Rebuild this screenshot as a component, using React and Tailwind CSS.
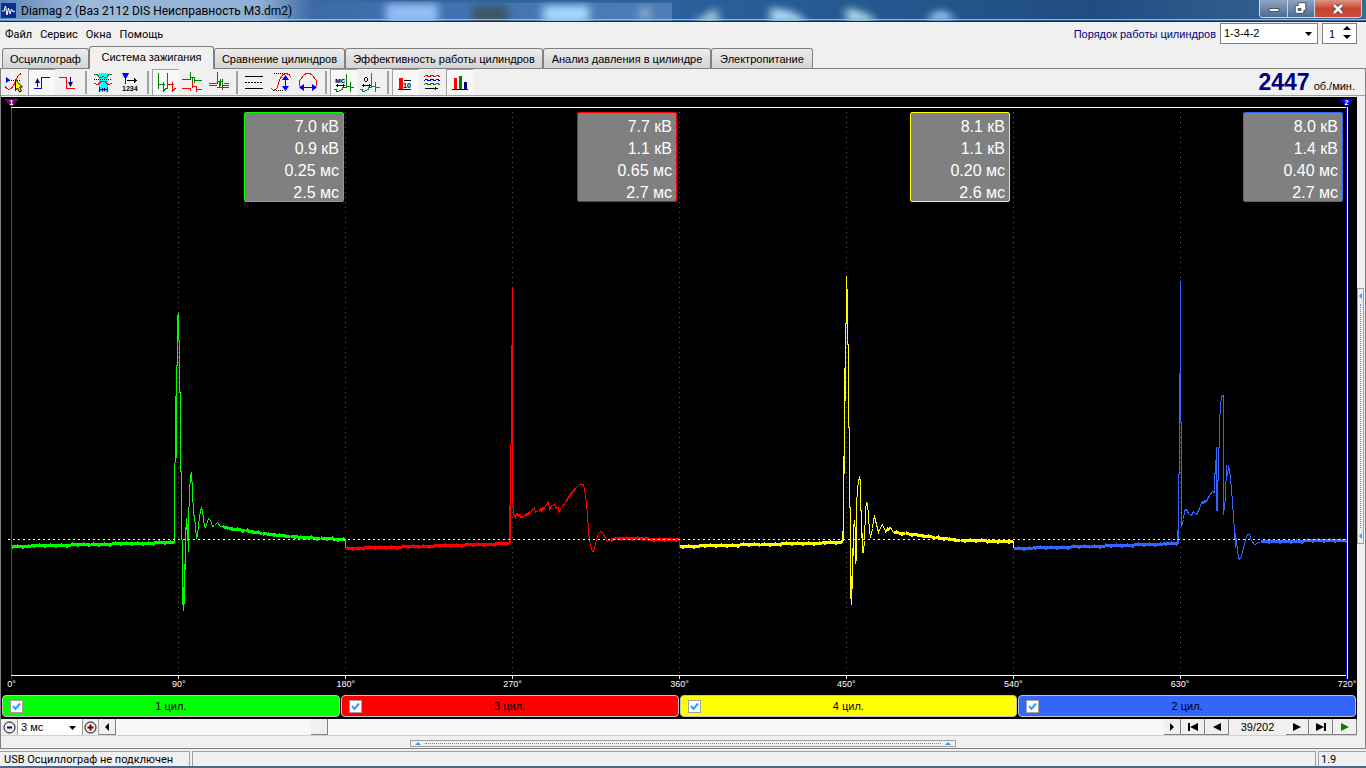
import React, { useState } from 'react';

const TABS = [
  { id: 'scope', label: 'Осциллограф', width: 'w-[87px]' },
  { id: 'ignition', label: 'Система зажигания', width: 'w-[125px]' },
  { id: 'compare', label: 'Сравнение цилиндров', width: 'w-[131px]' },
  { id: 'efficiency', label: 'Эффективность работы цилиндров', width: 'w-[198px]' },
  { id: 'pressure', label: 'Анализ давления в цилиндре', width: 'w-[168px]' },
  { id: 'power', label: 'Электропитание', width: 'w-[102px]' },
];

const CYLINDERS = [
  { name: '1 цил.', bg: 'bg-[#00ff00]', border: 'border-[#00ff00]', values: ['7.0 кВ', '0.9 кВ', '0.25 мс', '2.5 мс'] },
  { name: '3 цил.', bg: 'bg-[#ff0000]', border: 'border-[#ff0000]', values: ['7.7 кВ', '1.1 кВ', '0.65 мс', '2.7 мс'] },
  { name: '4 цил.', bg: 'bg-[#ffff00]', border: 'border-[#ffff00]', values: ['8.1 кВ', '1.1 кВ', '0.20 мс', '2.6 мс'] },
  { name: '2 цил.', bg: 'bg-[#3366ff]', border: 'border-[#3366ff]', values: ['8.0 кВ', '1.4 кВ', '0.40 мс', '2.7 мс'] },
];

// Secondary voltage per cylinder, [x, y] in chart units
const TRACES = [
  {
    color: '#00ff00',
    points: [
      [11, 546], [90, 544], [174, 542], [174, 470], [175, 456], [175, 396], [176, 457], [176, 365], [177, 365], [177, 317], [178, 313],
      [178, 340], [179, 340], [179, 392], [180, 392], [180, 471], [181, 471], [181, 539], [182, 540], [182, 598], [183, 610],
      [183, 587], [184, 603], [184, 564], [185, 569], [185, 535], [186, 518], [187, 540], [187, 524], [188, 551], [188, 523],
      [189, 492], [190, 475], [191, 473], [192, 490], [193, 515], [194, 515], [195, 527], [196, 537], [197, 535], [198, 524],
      [200, 510], [201, 508], [202, 510], [203, 518], [204, 526], [205, 527], [207, 521], [208, 518], [210, 520], [212, 526],
      [214, 525], [217, 522], [220, 526], [222, 526], [228, 528], [245, 530], [262, 533], [290, 536], [320, 538], [345, 539], [345, 547],
    ],
  },
  {
    color: '#ff0000',
    points: [
      [345, 548], [420, 546], [509, 543], [509, 505], [510, 542], [510, 444], [511, 444], [511, 345], [512, 345], [512, 287], [512, 505],
      [513, 505], [513, 513], [515, 517], [516, 513], [521, 517], [525, 515], [530, 512], [534, 507], [535, 512], [538, 510], [544, 507],
      [548, 501], [549, 509], [551, 505], [554, 504], [556, 508], [558, 506], [558, 512], [561, 507], [565, 502], [570, 494],
      [575, 488], [579, 484], [583, 484], [585, 495], [586, 503], [587, 515], [588, 530], [589, 540], [590, 545], [592, 551], [593, 551],
      [595, 544], [597, 535], [599, 532], [601, 531], [603, 534], [605, 538], [607, 541], [610, 539], [616, 538], [679, 539], [679, 547],
    ],
  },
  {
    color: '#ffff00',
    points: [
      [679, 546], [760, 544], [842, 542], [842, 531], [843, 540], [843, 456], [844, 473], [844, 368], [845, 400], [845, 323], [846, 323],
      [846, 276], [847, 301], [847, 344], [848, 344], [848, 427], [849, 427], [849, 507], [850, 507], [850, 592], [851, 604],
      [851, 576], [852, 588], [852, 548], [853, 555], [853, 527], [854, 520], [855, 532], [855, 563], [856, 558], [856, 505],
      [857, 488], [859, 476], [860, 482], [860, 510], [861, 510], [861, 537], [862, 533], [862, 552], [863, 552], [864, 540],
      [865, 510], [866, 502], [867, 503], [868, 516], [869, 530], [870, 537], [872, 528], [873, 519], [874, 516], [876, 524],
      [878, 532], [880, 527], [882, 524], [885, 531], [890, 527], [893, 532], [905, 533], [935, 537], [960, 540], [1013, 541], [1013, 547],
    ],
  },
  {
    color: '#3366ff',
    points: [
      [1013, 548], [1090, 546], [1177, 543], [1177, 530], [1178, 543], [1178, 474], [1179, 474], [1179, 373], [1180, 421], [1180, 280], [1180, 422],
      [1181, 422], [1181, 526], [1183, 519], [1184, 510], [1186, 509], [1188, 513], [1191, 515], [1193, 511], [1196, 514],
      [1199, 508], [1201, 502], [1206, 501], [1209, 495], [1212, 491], [1214, 492], [1214, 473], [1215, 473], [1216, 447],
      [1216, 510], [1217, 510], [1217, 480], [1218, 480], [1218, 447], [1219, 447], [1219, 422], [1220, 405], [1221, 396],
      [1223, 395], [1223, 514], [1225, 498], [1226, 465], [1227, 475], [1228, 467], [1229, 469], [1230, 478], [1231, 488], [1232, 503],
      [1233, 515], [1234, 532], [1235, 547], [1235, 533], [1237, 550], [1238, 557], [1239, 559], [1241, 556], [1243, 548],
      [1245, 539], [1247, 534], [1249, 534], [1251, 540], [1254, 544], [1257, 543], [1260, 541], [1346, 540],
    ],
  },
];

const GRID_X = [178, 345, 512, 679, 846, 1013, 1180];

const DEGREES = ['90°', '180°', '270°', '360°', '450°', '540°', '630°'];

// Adds measurement noise to the long, nearly flat parts of a trace
function tracePath(points) {
  let d = `M${points[0][0]} ${points[0][1]}`;
  for (let i = 1; i < points.length; i++) {
    const [x0, y0] = points[i - 1];
    const [x1, y1] = points[i];
    if (x1 - x0 > 4) {
      for (let x = x0 + 1; x < x1; x++) {
        const y = Math.round(y0 + ((y1 - y0) * (x - x0)) / (x1 - x0));
        const n = (x * 7919 + i * 131) % 11;
        d += `L${x} ${y - 1}V${y + (n > 8 ? 2 : 1)}`;
        if (n === 4) d += `V${y - 2}`;
      }
    }
    d += `L${x1} ${y1}`;
  }
  return d;
}

const line = { fill: 'none', strokeWidth: 1, shapeRendering: 'crispEdges' };

const ICONS = {
  pick: (
    <>
      <path d="M5 8L9 11L5 14Z" fill="#0000ff" />
      <path d="M8 11.500H19" stroke="#000080" strokeDasharray="1 1" {...line} />
      <path d="M4 17Q6 21 9 20T14 13T20 4.500" stroke="#ff0000" {...line} />
      <path d="M14.500 11V21.500L16.500 19L18.500 23L20.500 22L18.500 18H21.500Z" fill="#ffff00" stroke="#000" />
    </>
  ),
  rising: (
    <>
      <path d="M6 19.500H13.500V8.500H22" stroke="#0000ff" {...line} />
      <path d="M9.500 18V10" stroke="#000080" {...line} />
      <path d="M7 14L9.500 9L12 14Z" fill="#000080" />
    </>
  ),
  falling: (
    <>
      <path d="M4 8.500H11.500V19.500H20" stroke="#ff0000" {...line} />
      <path d="M15.500 8V17" stroke="#000080" {...line} />
      <path d="M13 13L15.500 18L18 13Z" fill="#000080" />
    </>
  ),
  window: (
    <>
      <path d="M9 4H18V23H9Z" fill="#00ffff" />
      <path d="M4 5.500H7L10 9L13.500 7.500L16 9L19 5.500H22" stroke="#008000" {...line} />
      <path d="M4 10.500H22" stroke="#000" strokeDasharray="1 1" {...line} />
      <path d="M4 14.500L8 15.500L11 12.500H15L18 15.500L22 14.500" stroke="#ff0000" {...line} />
      <path d="M9.500 18V23M17.500 18V23M10 20.500H17M12.500 19V22M14.500 19V22" stroke="#000080" {...line} />
    </>
  ),
  numbers: (
    <>
      <path d="M5 4H12L9.500 9H7.500Z" fill="#0000ff" />
      <path d="M8.500 8V15" stroke="#0000ff" {...line} />
      <path d="M10 11.500H20M17.500 9V14M18.500 10V13" stroke="#000" {...line} />
      <text x="5" y="22" fontSize="7" fontWeight="bold" fontFamily="Liberation Sans, sans-serif">1234</text>
    </>
  ),
  parade: (
    <>
      <path d="M6.500 4V20M6.500 15.500H12.500M11.500 13V22L14.500 19" stroke="#008000" {...line} />
      <path d="M15.500 4V20M15.500 15.500H21.500M20.500 13V22L23.500 19" stroke="#ff0000" {...line} />
    </>
  ),
  raster: (
    <>
      <path d="M3 10.500H11.500V3M11.500 8.500H15.500V14M13.500 8V13M15.500 11.500H23" stroke="#008000" {...line} />
      <path d="M3 19.500H11.500V22M13.500 12V19M13.500 17.500H17.500V23M17.500 20.500H23" stroke="#ff0000" {...line} />
    </>
  ),
  overlay: (
    <>
      <path d="M3 16.500H11M13.500 12V19M11 18.500H23M16.500 14V21M18 14.500H23" stroke="#ff0000" {...line} />
      <path d="M3 14.500H11.500V3M11.500 12.500H16.500V19M14.500 10V17M16.500 16.500H23M16.500 10V13" stroke="#008000" {...line} />
    </>
  ),
  lines: (
    <>
      <path d="M4 7.500H22M4 19.500H22" stroke="#000" {...line} />
      <path d="M4 13.500H22" stroke="#000" strokeDasharray="2 1" {...line} />
    </>
  ),
  height: (
    <>
      <path d="M6 4.500H15M6 21.500H15" stroke="#000" strokeDasharray="1 1" {...line} />
      <path d="M3 19.500L6 21.500L9 19L12 10L15 5.500L18 4.500L21 5.500L23 8" stroke="#ff0000" {...line} />
      <path d="M17.500 9V20" stroke="#0000ff" {...line} />
      <path d="M14 11L17.500 6L21 11ZM14 17L17.500 22L21 17Z" fill="#0000ff" />
    </>
  ),
  width: (
    <>
      <path d="M6 19L4.500 16V12L8 7L11 4.500H15L18 7L21.500 12V16L20 19" stroke="#ff0000" {...line} />
      <path d="M8 18.500H18" stroke="#0000ff" {...line} />
      <path d="M9 15L4 18.500L9 22ZM17 15L22 18.500L17 22Z" fill="#0000ff" />
    </>
  ),
  timeMs: (
    <>
      <path d="M16.500 5V19M16.500 17.500H20.500V23M20.500 13V19M20 18.500H24M4 20.500H6V22H9L12 20.500V18.500H16.500" stroke="#008000" {...line} />
      <path d="M6 16.500H15M7.500 15V18M13.500 15V18" stroke="#000" {...line} />
      <text x="5" y="14" fontSize="8" fontWeight="bold" fontFamily="Liberation Sans, sans-serif">мс</text>
    </>
  ),
  timeDeg: (
    <>
      <path d="M14.500 4V19M14.500 17.500H18.500V23M18.500 13V19M18 18.500H23M3 20.500H5V22H8L11 20.500V18.500H14.500" stroke="#008080" {...line} />
      <path d="M5 16.500H14M6.500 15V18M12.500 15V18M8 8.500H10M8 12.500H10M7.500 9V12M10.500 9V12" stroke="#000" {...line} />
    </>
  ),
  digits: (
    <>
      <path d="M7 9H11V20H7Z" fill="#ff0000" />
      <path d="M6 20.500H19M12 11.500H19" stroke="#000" {...line} />
      <text x="11" y="19" fontSize="7" fontWeight="bold" fontFamily="Liberation Sans, sans-serif">10</text>
    </>
  ),
  waves: (
    <>
      <path d="M5 8L7 6L10 8L13 6L16 8L18 6L21 8" stroke="#ff0000" {...line} />
      <path d="M5 12L7 10L10 12L13 10L16 12L18 10L21 12" stroke="#0000ff" {...line} />
      <path d="M5 16L7 14L10 16L13 14L16 16L18 14L21 16" stroke="#008000" {...line} />
      <path d="M6 19.500H19M16.500 18V21" stroke="#000" {...line} />
    </>
  ),
  bars: (
    <>
      <path d="M8 9H11V20H8Z" fill="#ff0000" />
      <path d="M13 7H16V20H13Z" fill="#008000" />
      <path d="M18 13H21V20H18Z" fill="#000080" />
      <path d="M6 20.500H22" stroke="#000" {...line} />
    </>
  ),
};

const TOOL_GROUPS = [
  [['pick', 'Курсор', false], ['rising', 'Фронт', true], ['falling', 'Спад', false]],
  [['window', 'Окно', false], ['numbers', 'Нумерация', false]],
  [['parade', 'Парад', true], ['raster', 'Растр', false], ['overlay', 'Наложение', false]],
  [['lines', 'Уровни', false], ['height', 'Масштаб', false], ['width', 'Ширина', false]],
  [['timeMs', 'Время, мс', true], ['timeDeg', 'Градусы', false]],
  [['digits', 'Значения', true], ['waves', 'Кадры', false], ['bars', 'Гистограмма', true]],
];

function ToolButton({ icon, label, pressed }) {
  return (
    <button
      type="button"
      aria-label={label}
      aria-pressed={pressed}
      className={`w-[27px] h-[26px] ${pressed ? 'bg-[#f8f8f8] border-l border-t border-[#a0a0a0]' : ''}`}
    >
      <svg viewBox="0 0 27 26" className={`block w-[27px] h-[26px] ${pressed ? '-ml-px -mt-px' : ''}`}>
        {ICONS[icon]}
      </svg>
    </button>
  );
}

function TitleBar() {
  return (
    <header className="relative h-[22px] flex justify-between bg-[#2a5c94] border-b border-[#1c2c48] overflow-hidden">
      <svg className="absolute inset-0 w-full h-full" viewBox="0 0 1366 22" preserveAspectRatio="none">
        <defs>
          <linearGradient id="glass">
            <stop offset="0" stopColor="#5c86ba" />
            <stop offset="0.06" stopColor="#9cb9da" />
            <stop offset="0.19" stopColor="#8fb0d6" />
            <stop offset="0.23" stopColor="#3a68a2" />
            <stop offset="0.49" stopColor="#2a619c" />
            <stop offset="0.8" stopColor="#204d80" />
            <stop offset="1" stopColor="#3c6798" />
          </linearGradient>
          <linearGradient id="panel">
            <stop offset="0" stopColor="#4a7ab4" stopOpacity="0" />
            <stop offset="0.3" stopColor="#3e70b0" />
            <stop offset="1" stopColor="#4e7eb6" />
          </linearGradient>
          <filter id="soft"><feGaussianBlur stdDeviation="4" /></filter>
        </defs>
        <rect width="1366" height="22" fill="url(#glass)" />
        <path d="M300 3H672V22H300Z" fill="url(#panel)" />
        <g filter="url(#soft)">
          <path d="M386 4H438V24H386Z" fill="#93bdf2" />
          <path d="M472 6H508V24H472Z" fill="#3c5566" />
          <path d="M543 6H589V24H543Z" fill="#a4d6fc" />
          <path d="M640 8H650V20H640Z" fill="#8fb0cc" />
          <path d="M716 8L720 24H692Z" fill="#a0c8d8" />
          <path d="M770 8Q800 10 806 24H770Z" fill="#a8d4ee" />
          <path d="M846 8Q872 12 876 24H846Z" fill="#a4d0dc" />
          <path d="M926 22Q940 0 956 22Z" fill="#9cc4f0" />
        </g>
        <path d="M0 20.500H1366" stroke="#a9bdd4" />
      </svg>
      <div className="relative flex items-center gap-[5px] pl-px">
        <svg viewBox="0 0 15 15" className="w-[15px] h-[15px]">
          <rect width="15" height="15" fill="#0a2f8c" />
          <path d="M1 8H3L4.500 3L6 12L7.500 5L9 11L10.500 6L12 9L14 8" fill="none" stroke="#fff" />
        </svg>
        <h1 className="text-[12px] leading-[20px] font-['Roboto',sans-serif] text-black">Diamag 2 (Ваз 2112 DIS Неисправность М3.dm2)</h1>
      </div>
      <div className="relative flex h-[18px] mr-1 rounded-b border border-t-0 border-[#d0dae6] overflow-hidden">
        <button type="button" aria-label="Свернуть" className="w-[28px] flex items-center justify-center bg-gradient-to-b from-[#8fa6c0] to-[#4a6c94] border-r border-[#c8d4e2]">
          <svg viewBox="0 0 28 17" className="w-[28px] h-[17px]"><path d="M9.500 8.500H19.500V11.500H9.500Z" fill="#fff" stroke="#444c58" /></svg>
        </button>
        <button type="button" aria-label="Восстановить" className="w-[27px] flex items-center justify-center bg-gradient-to-b from-[#8fa6c0] to-[#4a6c94] border-r border-[#c8d4e2]">
          <svg viewBox="0 0 27 17" className="w-[27px] h-[17px]">
            <path d="M10.500 2.500H18.500V10.500H16.500V13.500H7.500V5.500H10.500Z" fill="#fff" stroke="#444c58" />
            <path d="M10.500 8.500H13.500V10.500H10.500Z" fill="#6c86a6" stroke="#444c58" />
          </svg>
        </button>
        <button type="button" aria-label="Закрыть" className="w-[46px] flex items-center justify-center bg-gradient-to-b from-[#dc9484] via-[#c8452c] to-[#c8503c]">
          <svg viewBox="0 0 12 12" className="w-[12px] h-[12px]">
            <path d="M2 2L10 10M10 2L2 10" stroke="#503c44" strokeWidth="4.500" />
            <path d="M2 2L10 10M10 2L2 10" stroke="#fff" strokeWidth="2.600" />
          </svg>
        </button>
      </div>
    </header>
  );
}

function MenuBar() {
  return (
    <div className="h-[24px] flex justify-between">
      <nav className="flex items-center gap-2 pl-[5px] pt-0.5 font-['Roboto',sans-serif]">
        {['Файл', 'Сервис', 'Окна', 'Помощь'].map((item) => (
          <button key={item} type="button" className="text-[11px]">{item}</button>
        ))}
      </nav>
      <div className="flex items-start gap-1 pt-px pr-[9px]">
        <label htmlFor="order" className="text-[11px] leading-[22px] text-[#000080]">Порядок работы цилиндров</label>
        <div className="relative">
          <select id="order" className="appearance-none w-[98px] h-[21px] pl-[3px] pb-0.5 text-[11px] bg-white border border-[#808080]" defaultValue="1-3-4-2">
            <option>1-3-4-2</option>
            <option>1-2-4-3</option>
          </select>
          <svg viewBox="0 0 7 4" className="absolute right-[6px] top-[9px] w-[7px] h-[4px] pointer-events-none"><path d="M0 0H7L3.500 4Z" /></svg>
        </div>
        <div className="relative">
          <input type="text" aria-label="Номер цилиндра" defaultValue="1" className="w-[35px] h-[21px] pl-1.5 text-[11px] bg-white border border-[#808080]" />
          <svg viewBox="0 0 8 14" className="absolute right-1.5 top-[3px] w-[8px] h-[14px] pointer-events-none"><path d="M4 0L8 4H0ZM0 9H8L4 13Z" /></svg>
        </div>
      </div>
    </div>
  );
}

function ScopeChart() {
  return (
    <div className="relative flex-1 min-h-[320px] flex flex-col bg-black">
      <svg viewBox="1 97 1356 598" preserveAspectRatio="none" className="absolute inset-0 w-full h-full" shapeRendering="crispEdges" fill="none">
        {GRID_X.map((x) => (
          <g key={x}>
            <path d={`M${x + 0.5} 112V675`} stroke="#585858" strokeDasharray="1 4" />
            <path d={`M${x + 0.5} 675V679`} stroke="#fff" />
          </g>
        ))}
        <path d="M11 107.500H1347M11 675.500H1347" stroke="#fff" />
        <path d="M11.500 104V107M11.500 676V679" stroke="#800080" />
        <path d="M11.500 108V675" stroke="#505050" />
        <path d="M1346.500 104V679" stroke="#0000ff" />
        <path d="M1347.500 107V679" stroke="#fff" />
        {TRACES.map((t) => (
          <path key={t.color} d={tracePath(t.points)} stroke={t.color} transform="translate(0.5 0.5)" />
        ))}
        <path d="M8 539.500H1346" stroke="#fff" strokeDasharray="2 3" />
        <g shapeRendering="auto">
          <path d="M4 99H19L11.500 107Z" fill="#800080" />
          <path d="M1339 99H1354L1346.500 107Z" fill="#0000ff" />
          <text x="9.500" y="105" fontSize="7" fontWeight="bold" fill="#fff" fontFamily="Liberation Sans, sans-serif">1</text>
          <text x="1344.500" y="105" fontSize="7" fontWeight="bold" fill="#fff" fontFamily="Liberation Sans, sans-serif">2</text>
        </g>
      </svg>
      <div className="relative grid grid-cols-4 pt-[15px] pl-[10px] pr-[14px]">
        {CYLINDERS.map((c) => (
          <div key={c.name} className="flex justify-end">
            <ul className={`w-[100px] h-[90px] rounded-[2px] border bg-[#808080] pr-1 pt-[3px] text-right text-[16px] leading-[22px] text-white ${c.border}`}>
              {c.values.map((v, i) => <li key={i}>{v}</li>)}
            </ul>
          </div>
        ))}
      </div>
      <div className="relative mt-auto flex justify-between pb-[5px] text-[9px] leading-[11px] text-white">
        <span className="w-[21px] text-center">0°</span>
        {DEGREES.map((d) => <span key={d} className="w-[20px] flex justify-center">{d}</span>)}
        <span className="w-[20px] flex justify-center">720°</span>
      </div>
    </div>
  );
}

function CylinderBar() {
  const [shown, setShown] = useState([true, true, true, true]);
  return (
    <div className="flex gap-px bg-black px-px h-[24px] pb-0.5">
      {CYLINDERS.map((c, i) => (
        <label key={c.name} className={`relative flex-1 flex items-center justify-center rounded-[4px] border border-[#c0c0c0] text-[11px] text-black ${c.bg}`}>
          <input
            type="checkbox"
            checked={shown[i]}
            onChange={() => setShown(shown.map((s, k) => (k === i ? !s : s)))}
            className="peer appearance-none absolute left-[7px] top-1 w-[13px] h-[13px] bg-white border border-[#a0a0a0]"
          />
          <svg viewBox="0 0 13 13" className="hidden peer-checked:block absolute left-[7px] top-1 w-[13px] h-[13px] pointer-events-none">
            <path d="M3 6L5.500 9L10 3.500" fill="none" stroke="#3399ff" strokeWidth="2" />
          </svg>
          {c.name}
        </label>
      ))}
    </div>
  );
}

function FrameButton({ label, width, d, color = '#000' }) {
  return (
    <button
      type="button"
      aria-label={label}
      className={`h-full flex items-center justify-center bg-[#f0f0f0] border-r border-b border-[#808080] ${width}`}
    >
      <svg viewBox="0 0 14 10" className="w-[14px] h-[10px]"><path d={d} fill={color} /></svg>
    </button>
  );
}

function ScrollRow() {
  return (
    <div className="flex h-[17px] bg-[#f0f0f0] border-b border-[#d0d0d0]">
      <button type="button" aria-label="Уменьшить" className="w-[17px] flex items-center justify-center border-r border-[#a0a0a0]">
        <svg viewBox="0 0 13 13" className="w-[13px] h-[13px]" fill="none">
          <circle cx="6.500" cy="6.500" r="5.500" stroke="#000" />
          <path d="M4 6.500H9" stroke="#000080" strokeWidth="2" />
        </svg>
      </button>
      <div className="relative">
        <select aria-label="Развёртка" className="appearance-none block w-[64px] h-[16px] pl-[3px] text-[11px] bg-white" defaultValue="3 мс">
          <option>3 мс</option>
          <option>5 мс</option>
        </select>
        <svg viewBox="0 0 7 4" className="absolute right-1.5 top-[7px] w-[7px] h-[4px] pointer-events-none"><path d="M0 0H7L3.500 4Z" /></svg>
      </div>
      <button type="button" aria-label="Увеличить" className="w-[17px] flex items-center justify-center border-x border-[#a0a0a0]">
        <svg viewBox="0 0 13 13" className="w-[13px] h-[13px]" fill="none">
          <circle cx="6.500" cy="6.500" r="5.500" stroke="#000" />
          <path d="M3.500 6.500H9.500M6.500 3.500V9.500" stroke="#800000" strokeWidth="2" />
        </svg>
      </button>
      <FrameButton label="Влево" width="w-[17px]" d="M9 1V9L5 5Z" />
      <div className="flex-1 flex bg-[#f7f7f7]">
        <div className="w-[195px]" />
        <div className="w-[17px] bg-[#f0f0f0] border-r border-b border-[#808080]" />
      </div>
      <FrameButton label="Вправо" width="w-[17px]" d="M5 1V9L9 5Z" />
      <FrameButton label="Первый кадр" width="w-[24px]" d="M2 1H4V9H2ZM12 1V9L4 5Z" />
      <FrameButton label="Предыдущий кадр" width="w-[24px]" d="M11 1V9L3 5Z" />
      <output className="w-[57px] text-center text-[11px] leading-[16px]">39/202</output>
      <FrameButton label="Следующий кадр" width="w-[23px]" d="M3 1V9L11 5Z" />
      <FrameButton label="Последний кадр" width="w-[24px]" d="M2 1V9L10 5ZM10 1H12V9H10Z" />
      <FrameButton label="Воспроизвести" width="w-[24px]" d="M3 1V9L11 5Z" color="#008000" />
    </div>
  );
}

export default function App() {
  const [activeTab, setActiveTab] = useState('ignition');

  return (
    <div className="w-full min-h-screen flex flex-col bg-[#f0f0f0] text-black font-['Liberation_Sans',Arial,sans-serif] leading-[14px]">
      <TitleBar />
      <MenuBar />

      {/* Tabs */}
      <div role="tablist" className="flex items-end h-[22px] pl-0.5">
        {TABS.map((tab) => (
          <button
            key={tab.id}
            type="button"
            role="tab"
            aria-selected={activeTab === tab.id}
            onClick={() => setActiveTab(tab.id)}
            className={`flex justify-center rounded-t-[3px] border border-b-0 border-[#808080] pt-[3px] text-[11px] whitespace-nowrap ${tab.width} ${
              activeTab === tab.id
                ? 'relative z-10 h-[23px] -mb-px bg-[#f0f0f0]'
                : 'h-[20px] bg-gradient-to-b from-[#ececec] to-[#d4d4d4]'
            }`}
          >
            {tab.label}
          </button>
        ))}
      </div>

      <div className="flex-1 flex flex-col border-y border-x border-[#808080]">
        {/* Toolbar */}
        <div className="flex justify-between border-b border-[#a0a0a0]">
          <div className="flex gap-2">
            {TOOL_GROUPS.map((group, g) => (
              <div key={g} className={`relative flex ${g > 0 ? "before:content-[''] before:absolute before:-left-[5px] before:top-0.5 before:h-[23px] before:w-0.5 before:bg-[#a0a0a0]" : ''}`}>
                {group.map(([icon, label, pressed]) => (
                  <ToolButton key={icon} icon={icon} label={label} pressed={pressed} />
                ))}
              </div>
            ))}
          </div>
          <div className="flex items-baseline gap-1 h-[26px] pr-[10px] leading-[26px]">
            <strong className="text-[23px]/[26px] text-[#000080]">2447</strong>
            <span className="text-[11px]/[14px]">об./мин.</span>
          </div>
        </div>

        <div className="flex-1 flex pt-px">
          <main className="flex-1 flex flex-col">
            <ScopeChart />
            <CylinderBar />
            <ScrollRow />
          </main>
          <div className="w-[8px] flex flex-col pt-[191px]">
            <div className="w-[7px] h-[256px] flex flex-col items-center justify-between py-1 border border-[#a0a0a0]">
              <svg viewBox="0 0 3 6" className="w-[3px] h-[6px]"><path d="M3 0V6L0 3Z" fill="#3399ff" /></svg>
              <span className="w-px h-[224px] border-l border-dotted border-[#3399ff]" />
              <svg viewBox="0 0 3 6" className="w-[3px] h-[6px]"><path d="M3 0V6L0 3Z" fill="#3399ff" /></svg>
            </div>
          </div>
        </div>

        <div className="h-[12px] flex justify-center pt-1">
          <div className="w-[40%] h-[7px] flex items-center justify-between px-1 border border-[#a0a0a0]">
            <svg viewBox="0 0 6 3" className="w-[6px] h-[3px]"><path d="M0 3H6L3 0Z" fill="#3399ff" /></svg>
            <span className="flex-1 mx-1 border-t border-dotted border-[#3399ff]" />
            <svg viewBox="0 0 6 3" className="w-[6px] h-[3px]"><path d="M0 3H6L3 0Z" fill="#3399ff" /></svg>
          </div>
        </div>
      </div>

      {/* Status bar */}
      <footer className="h-[19px] pt-0.5 flex gap-0.5 border-b-2 border-[#4a688e] text-[11px] leading-[16px] font-['Roboto',sans-serif]">
        <div className="w-[190px] pl-1 border-t border-r border-[#a0a0a0]">USB Осциллограф не подключен</div>
        <div className="flex-1 border-t border-x border-[#a0a0a0]" />
        <div className="w-[48px] pl-0.5 border-t border-l border-[#a0a0a0]">1.9</div>
      </footer>
    </div>
  );
}
